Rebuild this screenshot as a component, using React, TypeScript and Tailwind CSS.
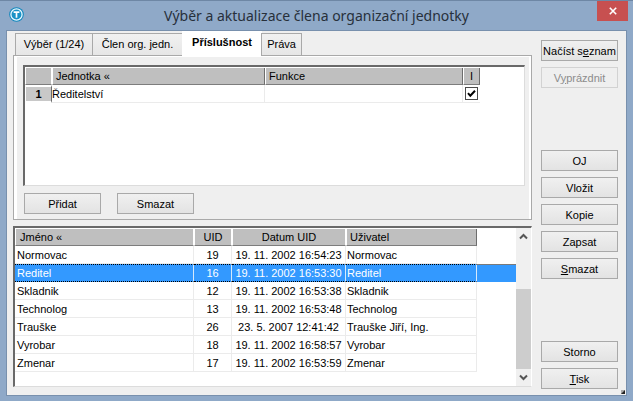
import { useState } from 'react';
import type { ReactNode } from 'react';
import { clsx } from 'clsx';

const TABS = [
  { label: 'Výběr (1/24)', width: 'w-[78px]' },
  { label: 'Člen org. jedn.', width: 'w-[91px]' },
  { label: 'Příslušnost', width: 'w-[80px]' },
  { label: 'Práva', width: 'w-[41px]' },
];

const MEMBERS = [
  { name: 'Normovac', uid: 19, date: '19. 11. 2002 16:54:23', user: 'Normovac' },
  { name: 'Reditel', uid: 16, date: '19. 11. 2002 16:53:30', user: 'Reditel' },
  { name: 'Skladnik', uid: 12, date: '19. 11. 2002 16:53:38', user: 'Skladnik' },
  { name: 'Technolog', uid: 13, date: '19. 11. 2002 16:53:48', user: 'Technolog' },
  { name: 'Trauške', uid: 26, date: '23. 5. 2007 12:41:42', user: 'Trauške Jiří, Ing.' },
  { name: 'Vyrobar', uid: 18, date: '19. 11. 2002 16:58:57', user: 'Vyrobar' },
  { name: 'Zmenar', uid: 17, date: '19. 11. 2002 16:53:59', user: 'Zmenar' },
];

function PushButton({ children, disabled }: { children: ReactNode; disabled?: boolean }) {
  return (
    <button
      type="button"
      disabled={disabled}
      className={clsx(
        'h-[21px] w-[77px] border text-center whitespace-nowrap',
        disabled
          ? 'border-[#d2d2d2] bg-[#efefef] text-[#8c8c8c]'
          : 'border-[#a9a9a9] bg-linear-to-b from-[#f0f0f0] to-[#e3e3e3]'
      )}
    >
      {children}
    </button>
  );
}

function HeadCell({
  children,
  className,
  edge = 'border-r border-r-[#6d6d6d]',
}: {
  children?: ReactNode;
  className?: string;
  edge?: string;
}) {
  return (
    <th
      scope="col"
      className={clsx(
        'h-[17px] border-b border-l border-b-[#7d7d7d] border-l-white bg-[#bfbfbf] p-0 font-normal',
        edge,
        className
      )}
    >
      {children}
    </th>
  );
}

function TitleBar() {
  return (
    <header className="flex h-[30px] items-start border-t border-[#6e87a5] pr-[5px] pl-[9px]">
      <svg className="mt-[6px] size-[15px]" viewBox="0 0 15 15" aria-hidden="true">
        <circle cx="7.5" cy="7.5" r="7.3" fill="#1187bd" />
        <circle cx="7.5" cy="7.5" r="5.6" fill="#1a92c6" stroke="#e9f8ff" strokeWidth="1.3" />
        <path d="M4.6 5.2h5.8M7.5 5.2v5.6" stroke="#fff" strokeWidth="1.7" fill="none" />
      </svg>
      <h1 className="flex-1 pl-[12px] text-center font-['Noto_Sans',sans-serif] text-[14px] leading-[29px] text-[#27303b]">
        Výběr a aktualizace člena organizační jednotky
      </h1>
      <button
        type="button"
        aria-label="Zavřít"
        className="flex h-[20px] w-[31px] items-center justify-center bg-[#c75050]"
      >
        <svg className="size-[8px]" viewBox="0 0 8 8" aria-hidden="true">
          <path d="M0.8 0.8l6.4 6.4M7.2 0.8l-6.4 6.4" stroke="#fff" strokeWidth="1.6" />
        </svg>
      </button>
    </header>
  );
}

function UnitGrid() {
  return (
    <div className="h-[121px] border-t-2 border-r border-b border-l-2 border-t-[#696969] border-r-[#dcdcdc] border-b-[#dcdcdc] border-l-[#696969] bg-white pt-px">
      <table className="table-fixed border-separate border-spacing-0">
        <colgroup>
          <col className="w-[27px]" />
          <col className="w-[213px]" />
          <col className="w-[198px]" />
          <col className="w-[17px]" />
        </colgroup>
        <thead>
          <tr>
            <HeadCell edge="border-r border-r-white" />
            <HeadCell className="pl-[3px] text-left">Jednotka «</HeadCell>
            <HeadCell className="pl-[3px] text-left">Funkce</HeadCell>
            <HeadCell className="text-center">I</HeadCell>
          </tr>
        </thead>
        <tbody>
          <tr>
            <th
              scope="row"
              className="h-[18px] border-y-2 border-r border-l border-white border-r-[#6d6d6d] bg-[#c8c8c8] p-0 text-center font-bold"
            >
              1
            </th>
            <td className="border-r border-b border-[#ebebeb] p-0">Ředitelství</td>
            <td className="border-r border-b border-[#ebebeb] p-0" />
            <td className="border-b border-[#ebebeb] p-0">
              <label className="relative flex justify-center">
                <input
                  type="checkbox"
                  defaultChecked
                  aria-label="I"
                  className="peer size-[13px] appearance-none border border-[#4a4a4a] bg-white"
                />
                <svg
                  className="pointer-events-none absolute top-0 hidden size-[13px] peer-checked:block"
                  viewBox="0 0 13 13"
                  aria-hidden="true"
                >
                  <path d="M3 6.2l2.3 2.6L10 3.8" fill="none" stroke="#000" strokeWidth="2" />
                </svg>
              </label>
            </td>
          </tr>
        </tbody>
      </table>
    </div>
  );
}

function ScrollBar() {
  return (
    <div className="flex w-[15px] shrink-0 flex-col bg-[#f0f0f0]">
      <button type="button" aria-label="Nahoru" className="flex h-[17px] items-center justify-center">
        <svg className="size-[9px]" viewBox="0 0 9 9" aria-hidden="true">
          <path d="M1 6.5l3.5-3.5L8 6.5" fill="none" stroke="#555" strokeWidth="2" />
        </svg>
      </button>
      <div className="flex flex-1 flex-col justify-end">
        <div className="h-[80px] bg-[#cdcdcd]" />
      </div>
      <button type="button" aria-label="Dolů" className="flex h-[17px] items-center justify-center">
        <svg className="size-[9px]" viewBox="0 0 9 9" aria-hidden="true">
          <path d="M1 2.5L4.5 6 8 2.5" fill="none" stroke="#555" strokeWidth="2" />
        </svg>
      </button>
    </div>
  );
}

function MemberGrid() {
  const [selected, setSelected] = useState(16);

  return (
    <div className="flex flex-1 border-t-2 border-r border-b border-l-2 border-t-[#696969] border-r-white border-b-[#dcdcdc] border-l-[#696969] bg-white">
      <div className="min-w-0 flex-1 pt-px">
        <table className="w-full table-fixed border-separate border-spacing-0">
          <colgroup>
            <col className="w-[179px]" />
            <col className="w-[38px]" />
            <col className="w-[114px]" />
            <col className="w-[131px]" />
            <col />
          </colgroup>
          <thead>
            <tr>
              <HeadCell edge="border-r border-r-white" className="pl-[4px] text-left">
                Jméno «
              </HeadCell>
              <HeadCell edge="border-r border-r-white" className="text-center">
                UID
              </HeadCell>
              <HeadCell edge="border-r border-r-white" className="text-center">
                Datum UID
              </HeadCell>
              <HeadCell className="pl-[3px] text-left">Uživatel</HeadCell>
              <td />
            </tr>
          </thead>
          <tbody>
            {MEMBERS.map(member => {
              const active = member.uid === selected;
              const cell = active
                ? 'border-y border-r border-y-black border-r-[#d6e9fb] [border-top-style:dotted] [border-bottom-style:dotted] p-0'
                : 'border-r border-b border-[#ebebeb] p-0';
              return (
                <tr
                  key={member.uid}
                  onClick={() => setSelected(member.uid)}
                  className={clsx('h-[18px]', active && 'bg-[#3399ff] text-white')}
                >
                  <td className={cell}>
                    <span className="pl-[2px]">{member.name}</span>
                  </td>
                  <td className={clsx(cell, 'text-center')}>{member.uid}</td>
                  <td className={clsx(cell, 'text-center')}>{member.date}</td>
                  <td className={cell}>
                    <span className="pl-px">{member.user}</span>
                  </td>
                  <td className={clsx(active && 'border-t border-[#7a7a7a]', 'p-0')} />
                </tr>
              );
            })}
          </tbody>
        </table>
      </div>
      <ScrollBar />
    </div>
  );
}

export default function App() {
  const [tab, setTab] = useState(2);

  return (
    <div className="flex min-h-screen flex-col bg-[#8fa9c8] font-['Liberation_Sans',Arial,sans-serif] text-[11px] leading-[14px] text-black">
      <TitleBar />
      <main className="relative mr-[6px] mb-[5px] ml-[6px] flex flex-1 gap-[9px] border border-[#7890ad] bg-[#efefef] pr-[8px] pl-[6px]">
        <div className="flex min-w-0 flex-1 flex-col pb-[8px]">
          <div role="tablist" className="relative z-10 -mb-px flex h-[25px] items-end pl-[2px]">
            {TABS.map((item, i) => (
              <button
                key={item.label}
                type="button"
                role="tab"
                aria-selected={tab === i}
                onClick={() => setTab(i)}
                className={clsx(
                  '-mr-px border-[#a9a9a9] text-center whitespace-nowrap',
                  item.width,
                  tab === i
                    ? 'h-[25px] bg-white pb-[3px] font-bold'
                    : 'h-[23px] border bg-linear-to-b from-[#f1f1f1] to-[#e6e6e6] pb-[2px]'
                )}
              >
                {item.label}
              </button>
            ))}
          </div>

          <section className="border border-[#a9a9a9] bg-white pt-px pr-[2px] pl-[3px]">
            <div className="bg-[#efefef] pt-[8px] pr-[4px] pb-[5px] pl-[6px]">
              <UnitGrid />
              <div className="mt-[7px] flex gap-[16px] pl-px">
                <PushButton>Přidat</PushButton>
                <PushButton>Smazat</PushButton>
              </div>
            </div>
          </section>

          <div className="mt-[6px] flex flex-1 flex-col">
            <MemberGrid />
          </div>
        </div>

        <aside className="flex flex-col justify-between pt-[9px] pb-[6px]">
          <div className="flex flex-col gap-[6px]">
            <PushButton>
              Načíst s<u>e</u>znam
            </PushButton>
            <PushButton disabled>
              V<u>y</u>prázdnit
            </PushButton>
          </div>
          <div className="flex flex-col gap-[6px]">
            <PushButton>OJ</PushButton>
            <PushButton>Vložit</PushButton>
            <PushButton>Kopie</PushButton>
            <PushButton>Zapsat</PushButton>
            <PushButton>
              <u>S</u>mazat
            </PushButton>
          </div>
          <div className="flex flex-col gap-[6px]">
            <PushButton>Storno</PushButton>
            <PushButton>
              <u>T</u>isk
            </PushButton>
          </div>
        </aside>

        {/* Resize grip */}
        <svg className="absolute right-px bottom-px size-[4px]" viewBox="0 0 4 4" aria-hidden="true">
          <path d="M0 0h4v4H0z" fill="#aaa" />
          <path d="M4 0v4H0z" fill="#222" />
        </svg>
      </main>
    </div>
  );
}
